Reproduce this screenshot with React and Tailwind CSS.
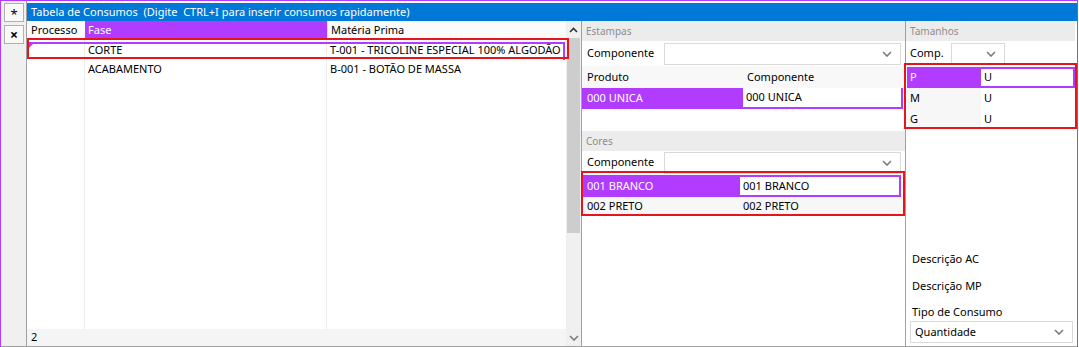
import React from "react";

const PURPLE = "bg-[#b13cff]";

// seta pequena de combo
const Chevron = ({ className = "" }) => (
  <svg width="10" height="6" viewBox="0 0 10 6" className={className}>
    <polyline points="1,1 5,5 9,1" fill="none" stroke="#7a7a7a" strokeWidth="1.6" />
  </svg>
);

const Combo = ({ className = "", children }) => (
  <div className={`flex items-center justify-between border border-[#d9d9d9] bg-white pl-1 pr-2 ${className}`}>
    <span>{children}</span>
    <Chevron />
  </div>
);

const SectionHeader = ({ title }) => (
  <div className="h-[20px] bg-[#ececec] pl-[4px] flex items-center text-[10px] text-[#8c8c8c]">{title}</div>
);

const RedBox = ({ className }) => (
  <div className={`absolute border-2 border-[#e8141c] pointer-events-none ${className}`} />
);

export default function App() {
  return (
    <div
      className="w-[1078px] h-[347px] border-l border-t border-r border-[#b13cff] bg-white flex text-[11px] text-black overflow-hidden relative whitespace-nowrap"
      style={{ fontFamily: '"Noto Sans", "DejaVu Sans", sans-serif' }}
    >
      {/* barra de botoes */}
      <div className="w-[26px] shrink-0 bg-[#f0f0f0] border-r border-[#a0a0a0] border-b flex flex-col items-center gap-[3px] pt-[2px] pl-[1px]">
        <div className="w-[20px] h-[19px] bg-[#f9f9f9] border border-[#b0b0b0] flex items-center justify-center text-[13px] leading-none pt-[3px]">*</div>
        <div className="w-[20px] h-[19px] bg-[#f9f9f9] border border-[#b0b0b0] flex items-center justify-center text-[14px] font-bold leading-none">×</div>
      </div>

      {/* area principal */}
      <div className="flex-1 min-w-0 flex flex-col pt-[2px] border-b border-[#a0a0a0]">
        <div className="h-[18px] bg-[#0078d7] text-white flex items-center pl-[4px] whitespace-pre">
          Tabela de Consumos  (Digite  CTRL+I para inserir consumos rapidamente)
        </div>

        <div className="flex-1 flex">
          {/* grade de fases */}
          <div className="w-[539px] shrink-0 flex flex-col">
            <div className="h-[18px] flex bg-[#fbfbfb]">
              <div className="w-[58px] shrink-0 pl-[4px] flex items-center">Processo</div>
              <div className={`w-[242px] shrink-0 ${PURPLE} text-white pl-[3px] flex items-center`}>Fase</div>
              <div className="flex-1 min-w-0 pl-[3px] flex items-center border-l border-[#e4e4e4]">Matéria Prima</div>
            </div>
            <div className="flex-1 flex relative">
              {/* linha selecionada */}
              <div className="absolute left-[2px] right-[1px] top-[3px] h-[18px] border-t-2 border-r-2 border-[#b13cff]" />
              <div className="w-[58px] shrink-0 border-r border-[#ececec] flex flex-col">
                <div className="h-[20px] pt-[3px] pl-[2px]">
                  <div className="w-0 h-0 border-t-[6px] border-t-[#b13cff] border-r-[6px] border-r-transparent" />
                </div>
              </div>
              <div className="w-[242px] shrink-0 border-r border-[#ececec] flex flex-col">
                <div className="h-[20px] flex items-center pl-[3px] pt-[3px]">CORTE</div>
                <div className="h-[20px] flex items-center pl-[3px]">ACABAMENTO</div>
              </div>
              <div className="flex-1 min-w-0 flex flex-col">
                <div className="h-[20px] flex items-center pl-[3px] pt-[3px]">T-001 - TRICOLINE ESPECIAL 100% ALGODÃO</div>
                <div className="h-[20px] flex items-center pl-[3px]">B-001 - BOTÃO DE MASSA</div>
              </div>
            </div>
            <div className="h-[17px] bg-[#f5f5f5] pl-[4px] flex items-center">2</div>
          </div>

          {/* scrollbar */}
          <div className="w-[15px] shrink-0 bg-[#f0f0f0] flex flex-col items-center">
            <div className="h-[17px] flex items-center">
              <svg width="9" height="6" viewBox="0 0 9 6">
                <polyline points="1,5 4.5,1.5 8,5" fill="none" stroke="#333" strokeWidth="1.6" />
              </svg>
            </div>
            <div className="w-[13px] h-[195px] bg-[#cdcdcd]" />
            <div className="flex-1" />
            <div className="h-[17px] flex items-center">
              <Chevron />
            </div>
          </div>

          {/* estampas / cores */}
          <div className="w-[324px] shrink-0 border-l border-[#a0a0a0] flex flex-col">
            <SectionHeader title="Estampas" />
            <div className="h-[25px] flex items-center pl-[5px]">
              <span className="w-[77px] shrink-0">Componente</span>
              <Combo className="w-[237px] h-[22px]" />
            </div>
            <div className="h-[22px] bg-[#f8f8f8] flex items-center">
              <span className="w-[161px] pl-[5px]">Produto</span>
              <span className="pl-[4px]">Componente</span>
            </div>
            <div className="h-[21px] flex">
              <div className={`w-[161px] shrink-0 ${PURPLE} text-white pl-[5px] flex items-center`}>000 UNICA</div>
              <div className="w-[160px] border-2 border-[#b13cff] border-l-0 border-t-0 bg-white pl-[3px] flex items-center">000 UNICA</div>
            </div>
            <div className="h-[22px]" />
            <SectionHeader title="Cores" />
            <div className="h-[23px] flex items-center pl-[5px]">
              <span className="w-[77px] shrink-0">Componente</span>
              <Combo className="w-[237px] h-[22px]" />
            </div>
            <div className="h-[22px] flex mt-[1px]">
              <div className={`w-[158px] shrink-0 ${PURPLE} text-white pl-[5px] flex items-center`}>001 BRANCO</div>
              <div className="w-[161px] border-2 border-[#b13cff] border-l-0 bg-white pl-[3px] flex items-center">001 BRANCO</div>
            </div>
            <div className="h-[19px] flex bg-[#f7f7f7]">
              <div className="w-[158px] shrink-0 pl-[5px] flex items-center">002 PRETO</div>
              <div className="pl-[3px] flex items-center">002 PRETO</div>
            </div>
          </div>

          {/* tamanhos */}
          <div className="flex-1 min-w-0 border-l border-[#a0a0a0] flex flex-col pr-[2px]">
            <SectionHeader title="Tamanhos" />
            <div className="h-[25px] flex items-center pl-[4px]">
              <span className="w-[41px] shrink-0">Comp.</span>
              <Combo className="w-[54px] h-[21px]" />
            </div>
            <div className="flex flex-col pl-[1px] pt-[1px]">
              <div className="h-[21px] flex">
                <div className={`w-[74px] shrink-0 ${PURPLE} text-white pl-[3px] flex items-center`}>P</div>
                <div className="flex-1 border-2 border-[#b13cff] border-l-0 bg-white pl-[3px] flex items-center">U</div>
              </div>
              <div className="h-[21px] flex">
                <div className="w-[74px] shrink-0 bg-[#f7f7f7] pl-[3px] flex items-center">M</div>
                <div className="flex-1 pl-[3px] flex items-center">U</div>
              </div>
              <div className="h-[20px] flex">
                <div className="w-[74px] shrink-0 bg-[#f7f7f7] pl-[3px] flex items-center">G</div>
                <div className="flex-1 pl-[3px] flex items-center">U</div>
              </div>
            </div>
            <div className="flex-1" />
            <div className="pl-[6px] flex flex-col">
              <div className="h-[25px] flex items-center">Descrição AC</div>
              <div className="h-[29px] flex items-center">Descrição MP</div>
              <div className="h-[19px] flex items-end">Tipo de Consumo</div>
              <Combo className="w-[163px] h-[22px] mt-[1px] mb-[3px] -ml-[2px]">Quantidade</Combo>
            </div>
          </div>
        </div>
      </div>

      {/* destaques vermelhos */}
      <RedBox className="left-[26px] top-[37px] w-[542px] h-[21px]" />
      <RedBox className="left-[580px] top-[170px] w-[324px] h-[45px]" />
      <RedBox className="left-[903px] top-[62px] w-[173px] h-[66px]" />
    </div>
  );
}
